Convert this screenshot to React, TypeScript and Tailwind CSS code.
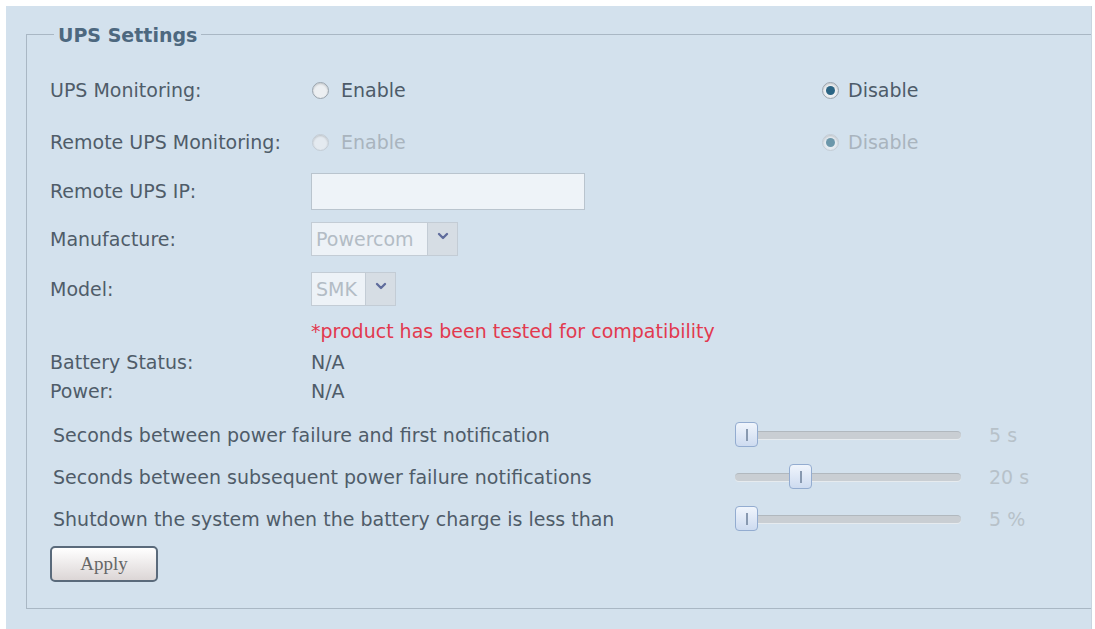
import { ChevronDown } from "lucide-react";

const font = { fontFamily: '"DejaVu Sans", Verdana, sans-serif' };

function Radio({ checked, disabled }: { checked?: boolean; disabled?: boolean }) {
  return (
    <span
      className={`flex items-center justify-center w-[17px] h-[17px] rounded-full border ${
        disabled ? "border-[#c3ccd5] bg-[#e4eaf0]" : "border-[#98a3ad] bg-[#eceff2]"
      } shadow-[inset_0_1px_2px_rgba(0,0,0,0.18)]`}
    >
      {checked && (
        <span
          className={`w-[9px] h-[9px] rounded-full ${
            disabled ? "bg-[#6c97aa]" : "bg-[#2b6584]"
          }`}
        />
      )}
    </span>
  );
}

function RadioPair({ disabled, value }: { disabled?: boolean; value: "enable" | "disable" }) {
  const text = disabled ? "text-[#a9b4be]" : "text-[#4d5b69]";
  return (
    <div className="flex items-center">
      <div className="flex items-center w-[511px] pl-[1px] gap-[12px]">
        <Radio checked={value === "enable"} disabled={disabled} />
        <span className={text}>Enable</span>
      </div>
      <div className="flex items-center gap-[9px]">
        <Radio checked={value === "disable"} disabled={disabled} />
        <span className={text}>Disable</span>
      </div>
    </div>
  );
}

function Select({ value, width }: { value: string; width: number }) {
  return (
    <div className="flex h-[34px]">
      <div
        className="flex items-center pl-[4px] bg-[#edf2f7] border border-[#c3ccd5] text-[#b3bcc5]"
        style={{ width }}
      >
        {value}
      </div>
      <div className="flex items-start justify-center pt-[5px] w-[30px] bg-[#d6dde4] border border-l-0 border-[#c3ccd5]">
        <ChevronDown size={16} strokeWidth={3.5} className="text-[#5f6c9c]" />
      </div>
    </div>
  );
}

function Slider({ pos, value }: { pos: number; value: string }) {
  return (
    <div className="flex items-center">
      <div className="relative w-[226px] h-[26px] flex items-center">
        <div className="w-full h-[8px] rounded-full bg-[#c9ced3] border-t border-[#b1b8be] shadow-[0_1px_0_#e6ebef]" />
        <div
          className="absolute top-0 w-[23px] h-[25px] rounded-[4px] border border-[#93acd0] bg-gradient-to-b from-[#f0f5fc] to-[#cddbf0] flex items-center justify-center"
          style={{ left: pos }}
        >
          <div className="w-[2px] h-[12px] bg-[#8899b0]" />
        </div>
      </div>
      <span className="ml-[28px] text-[#b7c1c9]">{value}</span>
    </div>
  );
}

const Label = ({ children }: { children: React.ReactNode }) => (
  <div className="w-[261px] shrink-0">{children}</div>
);

export default function App() {
  return (
    <div className="w-[1095px] h-[629px] bg-white pt-[6px] pl-[6px] pr-[3px] overflow-hidden" style={font}>
      <div className="h-[623px] bg-[#d3e1ed] pt-[15px] pl-[20px] border-r border-[#c8d4df]">
        <fieldset className="h-[588px] border border-r-0 border-[#a9b7c4] text-[19px] text-[#4f5c69]">
          <legend className="ml-[27px] px-[4px] pt-[2px] leading-[24px] font-bold text-[#4d687f]">UPS Settings</legend>

          <div className="pl-[23px] pt-[17px] flex flex-col">
            {/* MONITORING */}
            <div className="flex items-center h-[53px]">
              <Label>UPS Monitoring:</Label>
              <RadioPair value="disable" />
            </div>
            <div className="flex items-center h-[51px]">
              <Label>Remote UPS Monitoring:</Label>
              <RadioPair value="disable" disabled />
            </div>

            {/* REMOTE */}
            <div className="flex items-center h-[47px]">
              <Label>Remote UPS IP:</Label>
              <div className="w-[274px] h-[37px] bg-[#eef3f8] border border-[#b9c4ce]" />
            </div>
            <div className="flex items-center h-[48px]">
              <Label>Manufacture:</Label>
              <Select value="Powercom" width={117} />
            </div>
            <div className="flex items-center h-[52px]">
              <Label>Model:</Label>
              <Select value="SMK" width={55} />
            </div>
            <div className="flex items-center h-[33px]">
              <Label>&nbsp;</Label>
              <span className="text-[#e2394f]">*product has been tested for compatibility</span>
            </div>

            {/* STATUS */}
            <div className="flex items-center h-[29px]">
              <Label>Battery Status:</Label>
              <span>N/A</span>
            </div>
            <div className="flex items-center h-[29px]">
              <Label>Power:</Label>
              <span>N/A</span>
            </div>

            {/* NOTIFICATIONS */}
            <div className="pl-[3px] pt-[8px] flex flex-col">
              <div className="flex items-center h-[42px]">
                <div className="w-[682px]">Seconds between power failure and first notification</div>
                <Slider pos={0} value="5 s" />
              </div>
              <div className="flex items-center h-[42px]">
                <div className="w-[682px]">Seconds between subsequent power failure notifications</div>
                <Slider pos={54} value="20 s" />
              </div>
              <div className="flex items-center h-[42px]">
                <div className="w-[682px]">Shutdown the system when the battery charge is less than</div>
                <Slider pos={0} value="5 %" />
              </div>
            </div>

            <div className="pt-[6px]">
              <button
                className="w-[108px] h-[36px] rounded-[5px] border-2 border-[#5a6a7b] bg-gradient-to-b from-white to-[#dcd6d6] text-[#666666] text-[19px]"
                style={{ fontFamily: '"Liberation Serif", "Times New Roman", serif' }}
              >
                Apply
              </button>
            </div>
          </div>
        </fieldset>
      </div>
    </div>
  );
}
